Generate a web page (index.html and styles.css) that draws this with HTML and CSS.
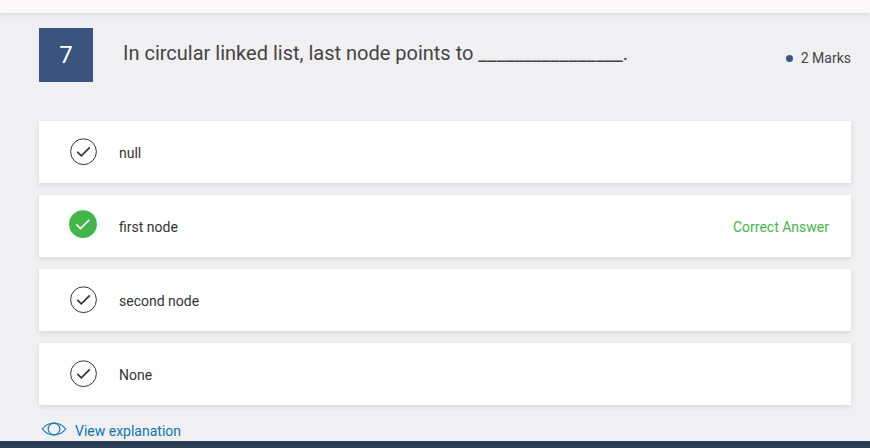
FILE: index.html
```html
<!DOCTYPE html>
<html lang="en">
<head>
<meta charset="utf-8">
<title>Quiz result</title>
<link rel="stylesheet" href="styles.css">
</head>
<body>
<div class="topbar"></div>
<main class="question">
  <header class="question-head">
    <span class="number">7</span>
    <h1 class="prompt">In circular linked list, last node points to ________________.</h1>
    <span class="marks"><i class="dot"></i>2 Marks</span>
  </header>
  <ul class="options">
    <li class="option">
      <svg class="check" viewBox="0 0 30 30"><circle cx="15.5" cy="14.7" r="12.9"/><path d="M9.3 14.9l4 4 8.5-8.5"/></svg>
      <span class="label">null</span>
    </li>
    <li class="option correct">
      <svg class="check" viewBox="0 0 30 30"><circle cx="15" cy="13.2" r="13.9"/><path d="M8.3 13.4l4.2 4.2 8.8-8.8"/></svg>
      <span class="label">first node</span>
      <span class="verdict">Correct Answer</span>
    </li>
    <li class="option">
      <svg class="check" viewBox="0 0 30 30"><circle cx="15.5" cy="14.7" r="12.9"/><path d="M9.3 14.9l4 4 8.5-8.5"/></svg>
      <span class="label">second node</span>
    </li>
    <li class="option">
      <svg class="check" viewBox="0 0 30 30"><circle cx="15.5" cy="14.7" r="12.9"/><path d="M9.3 14.9l4 4 8.5-8.5"/></svg>
      <span class="label">None</span>
    </li>
  </ul>
  <a class="explain">
    <svg class="eye" viewBox="0 0 26 14"><path d="M1.3 7Q6 1 13 1t11.7 6Q20 13 13 13T1.3 7z"/><circle cx="13" cy="7" r="5.8"/></svg>
    <span>View explanation</span>
  </a>
</main>
<footer class="footer"></footer>
</body>
</html>
```
FILE: styles.css
```css
* {
  box-sizing: border-box;
}

body {
  margin: 0;
  height: 448px;
  overflow: hidden;
  display: flex;
  flex-direction: column;
  background: #f0f0f2;
  color: #333;
  font: 14px/20px Roboto, sans-serif;
}

.topbar {
  flex: none;
  height: 13px;
  background: #fbf9fa;
  box-shadow: 0 1px 5px rgba(0, 0, 0, 0.12);
}

.question {
  flex: none;
  height: 428px;
  padding: 15px 19px 0 39px;
}

.question-head {
  display: flex;
  height: 93px;
  color: #444;
}

.number {
  width: 54px;
  height: 54px;
  background: #3a547f;
  color: #fff;
  font-size: 24px;
  line-height: 54px;
  text-align: center;
}

.prompt {
  margin: 0 0 0 30px;
  font-size: 20px;
  font-weight: 400;
  line-height: 50px;
}

.marks {
  display: flex;
  align-items: center;
  gap: 8px;
  height: 60px;
  margin-left: auto;
}

.dot {
  width: 7px;
  height: 7px;
  border-radius: 50%;
  background: #375787;
}

.options {
  display: grid;
  gap: 12px;
  margin: 0;
  padding: 0;
  list-style: none;
}

.option {
  display: flex;
  align-items: center;
  height: 62px;
  padding: 0 22px 0 29px;
  background: #fff;
  box-shadow: 0 2px 5px rgba(0, 0, 0, 0.1);
}

.check {
  width: 30px;
  height: 30px;
  margin-right: 21px;
  fill: none;
  stroke: #333;
  stroke-width: 1;
  overflow: visible;
}

.check path {
  stroke-width: 1.7;
}

.correct .check circle {
  fill: #43b649;
  stroke: none;
}

.correct .check path {
  stroke: #fff;
}

.label {
  padding-top: 2px;
}

.verdict {
  margin-left: auto;
  padding-top: 2px;
  color: #43b649;
}

.explain {
  display: flex;
  align-items: center;
  gap: 8px;
  padding: 16px 0 0 2px;
  color: #0e76a8;
}

.eye {
  width: 26px;
  height: 14px;
  margin-top: -5px;
  fill: none;
  stroke: #1878a8;
  stroke-width: 1.2;
}

.footer {
  flex: 1;
  background: #293e55;
}
```
